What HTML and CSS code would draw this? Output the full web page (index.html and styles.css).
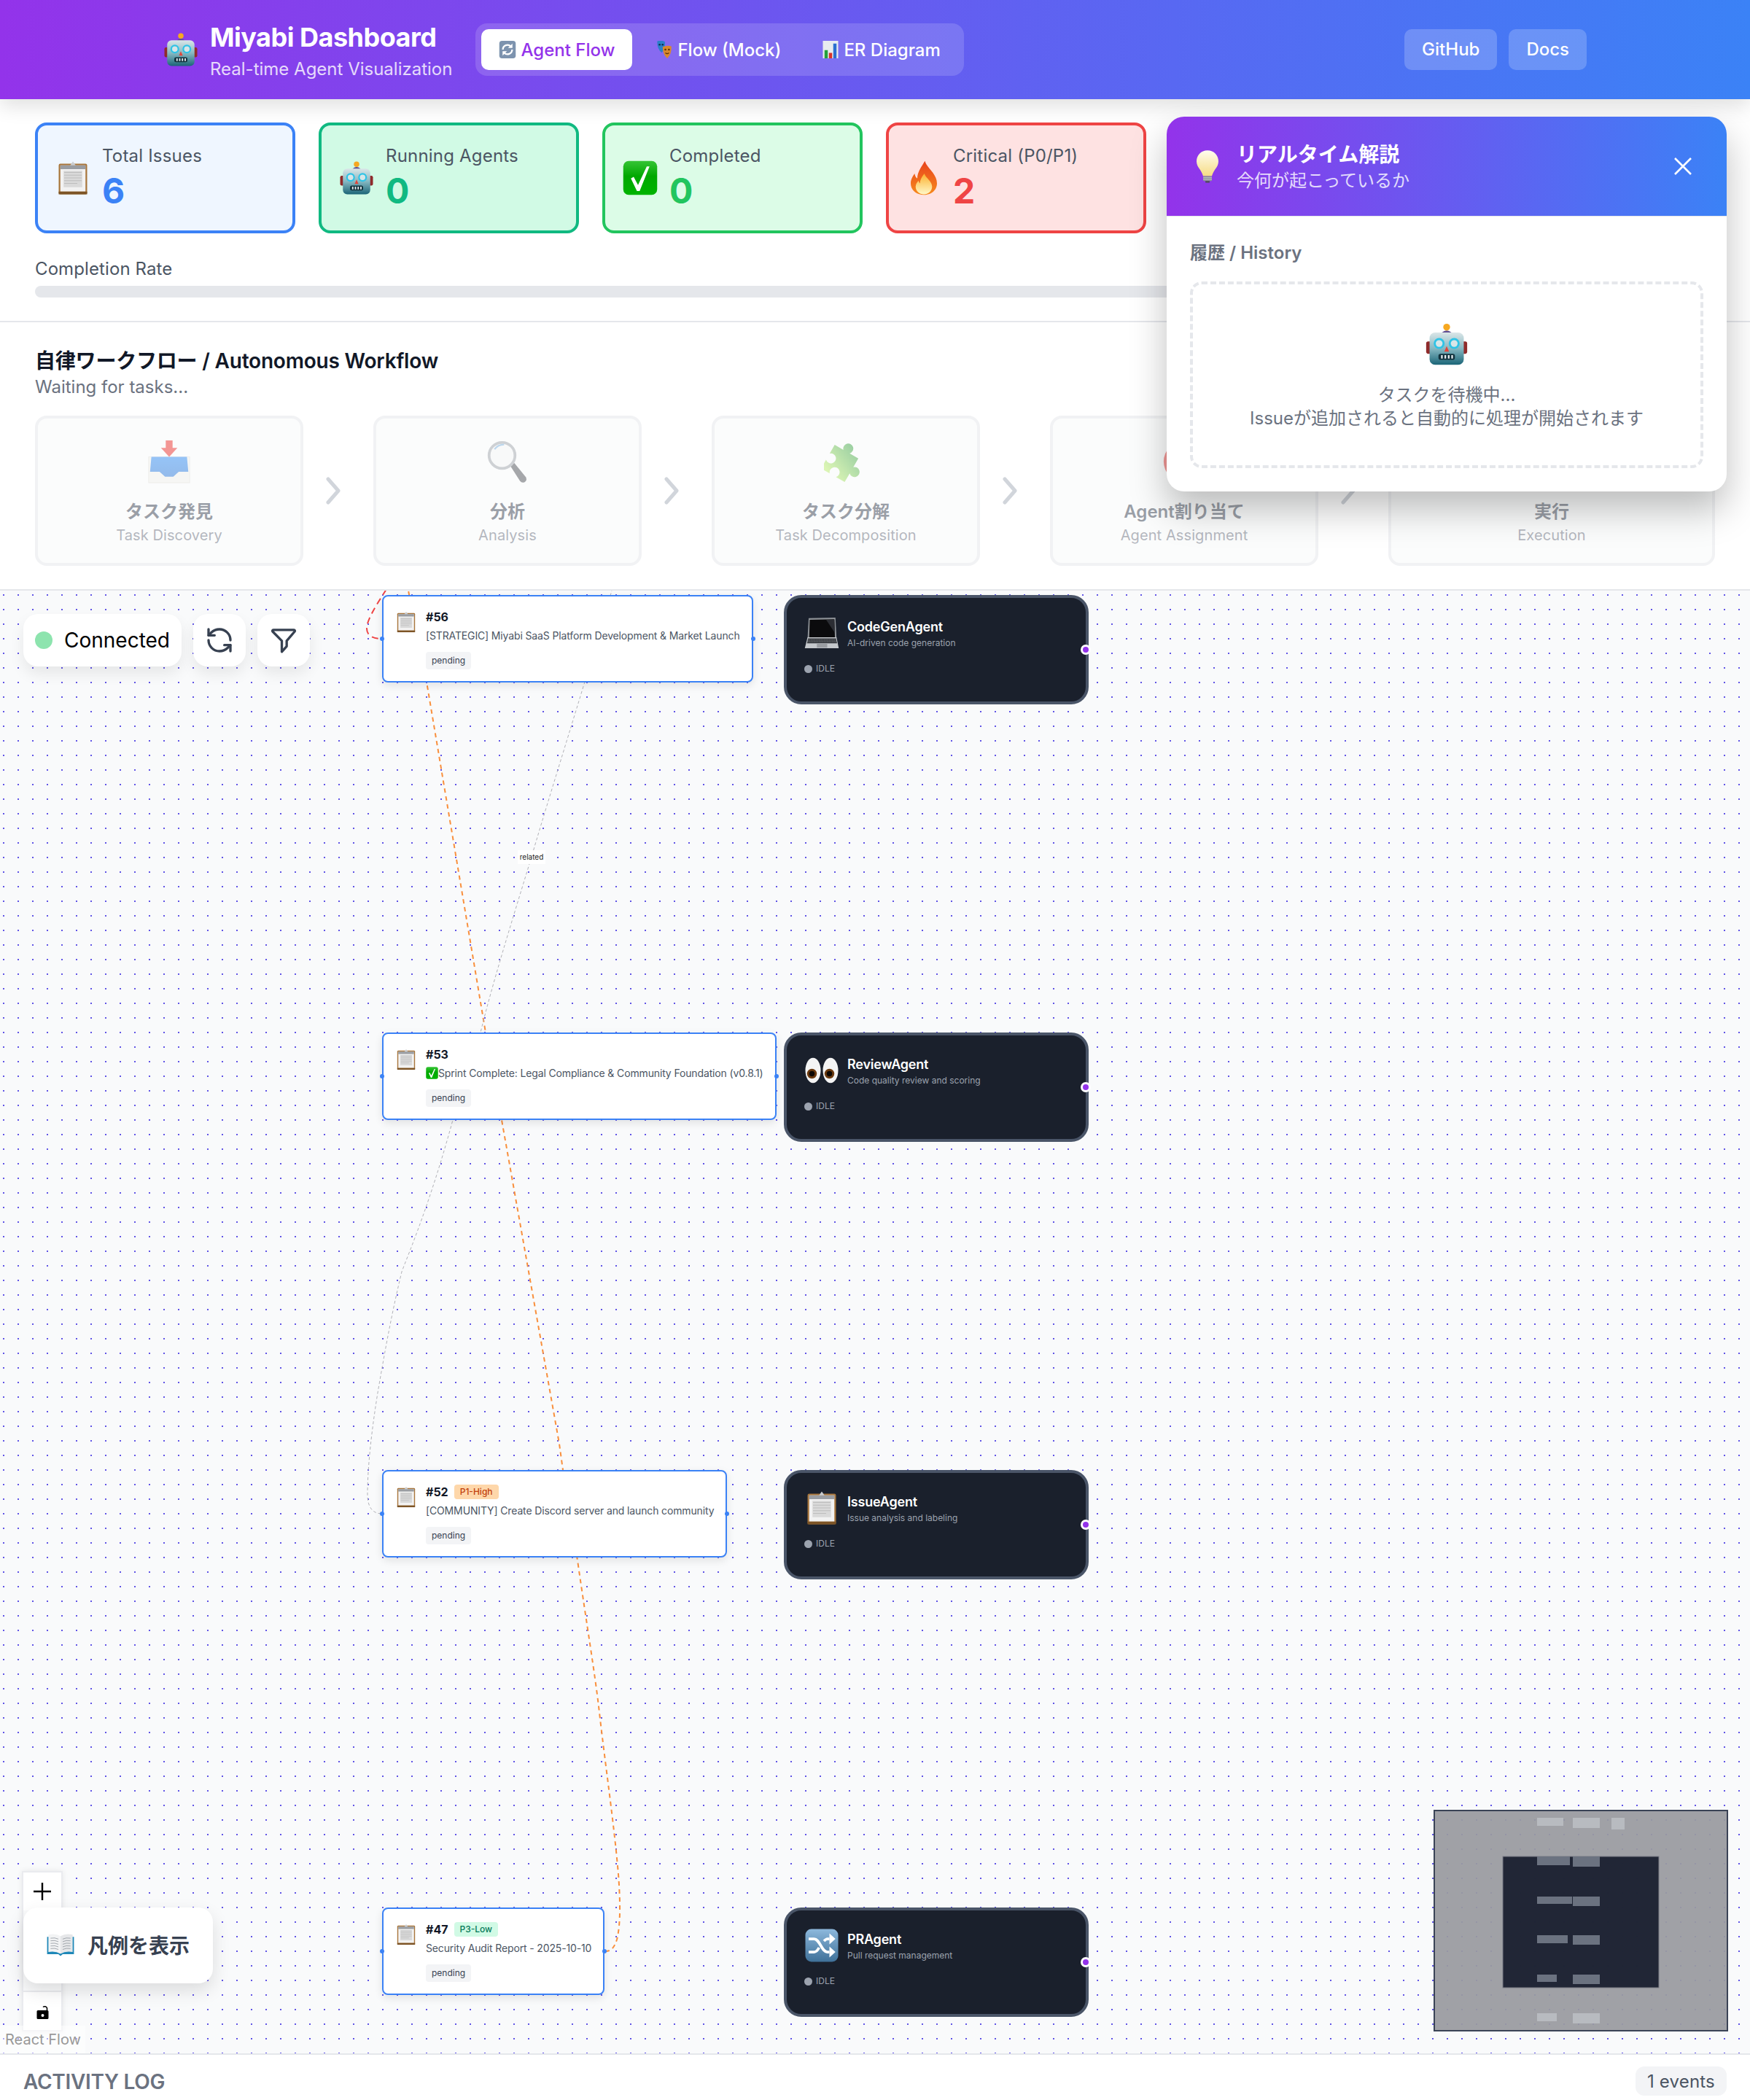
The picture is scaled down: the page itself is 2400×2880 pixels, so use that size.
FILE: index.html
```html
<!DOCTYPE html>
<html lang="en">
<head>
    <meta charset="UTF-8">
    <title>Miyabi Dashboard</title>
    <link rel="stylesheet" href="styles.css">
</head>
<body>

    <!-- Emoji drawn once, used everywhere -->
    <svg class="sprite" xmlns="http://www.w3.org/2000/svg">
        <defs>
            <linearGradient id="gHead" x1="0" y1="0" x2="0" y2="1">
                <stop offset="0" stop-color="#dbe6e8"/><stop offset="0.5" stop-color="#86b8c2"/><stop offset="1" stop-color="#1b6577"/>
            </linearGradient>
            <linearGradient id="gCheck" x1="0" y1="0" x2="0" y2="1">
                <stop offset="0" stop-color="#35c435"/><stop offset="0.45" stop-color="#00a800"/><stop offset="1" stop-color="#00b400"/>
            </linearGradient>
            <linearGradient id="gFire" x1="0" y1="0" x2="0" y2="1">
                <stop offset="0" stop-color="#e8421c"/><stop offset="1" stop-color="#f78a1d"/>
            </linearGradient>
            <linearGradient id="gFlame" x1="0" y1="0" x2="0" y2="1">
                <stop offset="0" stop-color="#fbb02d"/><stop offset="1" stop-color="#fff8c8"/>
            </linearGradient>
            <linearGradient id="gBulb" x1="0" y1="0" x2="0" y2="1">
                <stop offset="0" stop-color="#fffdf0"/><stop offset="1" stop-color="#f6dc85"/>
            </linearGradient>
            <linearGradient id="gTray" x1="0" y1="0" x2="0" y2="1">
                <stop offset="0" stop-color="#2f8af0"/><stop offset="1" stop-color="#2a78d8"/>
            </linearGradient>
            <linearGradient id="gPuzzle" x1="0.7" y1="0" x2="0.3" y2="1">
                <stop offset="0" stop-color="#2f9a45"/><stop offset="1" stop-color="#b8ec6c"/>
            </linearGradient>
            <linearGradient id="gShuffle" x1="0" y1="0" x2="0" y2="1">
                <stop offset="0" stop-color="#8db8dc"/><stop offset="1" stop-color="#3f7199"/>
            </linearGradient>
        </defs>

        <symbol id="e-robot" viewBox="0 0 64 64">
            <rect x="2" y="28" width="8" height="18" rx="3" fill="#8f2b2b"/>
            <rect x="54" y="28" width="8" height="18" rx="3" fill="#8f2b2b"/>
            <path d="M25 15q7-6 14 0v3H25z" fill="#5e4c8f"/>
            <circle cx="32" cy="7" r="5" fill="#f6a821"/>
            <rect x="7" y="15" width="50" height="47" rx="8" fill="url(#gHead)"/>
            <circle cx="21" cy="31" r="8" fill="#2fc3e6"/><circle cx="21" cy="31" r="5" fill="#d8e6e8"/>
            <circle cx="43" cy="31" r="8" fill="#2fc3e6"/><circle cx="43" cy="31" r="5" fill="#d8e6e8"/>
            <path d="M32 35l3.500 8h-7z" fill="#e2453a"/>
            <rect x="20" y="46" width="24" height="9" rx="3" fill="#12323d"/>
            <path d="M25 48v5M30 48v5M35 48v5M40 48v5" stroke="#e6eef0" stroke-width="2.400"/>
        </symbol>

        <symbol id="e-clipboard" viewBox="0 0 64 64">
            <rect x="6" y="6" width="52" height="56" rx="3" fill="#a8763c"/>
            <rect x="9" y="9" width="46" height="48" fill="#f2f2f2"/>
            <rect x="15" y="19" width="34" height="30" fill="#d9d9d9"/>
            <path d="M16 22h32M16 27h32M16 32h32M16 37h32M16 42h24" stroke="#bdbdbd" stroke-width="1.500"/>
            <rect x="9" y="9" width="46" height="7" fill="#9a9da2"/>
            <path d="M32 2l5 7H27z" fill="#c9ccd0"/>
            <rect x="6" y="57" width="52" height="5" fill="#7d5426"/>
        </symbol>

        <symbol id="e-check" viewBox="0 0 64 64">
            <rect x="1" y="1" width="62" height="62" rx="10" fill="url(#gCheck)"/>
            <path d="M15 33l5-3 8 15L44 11h5L31 56h-5z" fill="#fff"/>
        </symbol>

        <symbol id="e-fire" viewBox="0 0 64 64">
            <path d="M34 1c3 13 22 23 22 41 0 13-11 21-24 21S8 55 8 42c0-8 4-13 7-18 1 4 2 7 5 9 0-12 8-22 14-32z" fill="url(#gFire)"/>
            <path d="M33 24c2 8 14 14 14 24 0 8-7 14-15 14s-15-6-15-14c0-5 3-8 5-11 1 3 2 4 3 5 0-7 4-13 8-18z" fill="url(#gFlame)"/>
        </symbol>

        <symbol id="e-bulb" viewBox="0 0 64 64">
            <path d="M32 3c-12 0-20 9-20 20 0 11 9 15 12 27h16c3-12 12-16 12-27C52 12 44 3 32 3z" fill="url(#gBulb)"/>
            <rect x="24" y="50" width="16" height="9" rx="2" fill="#8d9096"/>
            <path d="M24 53h16M24 56h16" stroke="#d4d6d9" stroke-width="1"/>
            <rect x="28" y="59" width="8" height="3" rx="1" fill="#4d4f54"/>
        </symbol>

        <symbol id="e-inbox" viewBox="0 0 64 64">
            <rect x="2" y="25" width="60" height="38" fill="#eeeeea" stroke="#dcdcd6" stroke-width="1"/>
            <path d="M6 25h52l2 22H46l-8 7H26l-8-7H4z" fill="url(#gTray)"/>
            <path d="M27 1h10v11h7L32 25 20 12h7z" fill="#e8302c"/>
        </symbol>

        <symbol id="e-magnifier" viewBox="0 0 64 64">
            <path d="M36 38l6-4 17 21q2 5-2 7t-7-2z" fill="#4e5157"/>
            <circle cx="24" cy="23" r="19" fill="#f3f4f5" stroke="#9ea4ab" stroke-width="4"/>
            <path d="M13 14q5-7 14-7" fill="none" stroke="#7cb0dc" stroke-width="2.500"/>
        </symbol>

        <symbol id="e-puzzle" viewBox="0 0 64 64">
            <path transform="rotate(30 32 32) translate(-7 0) scale(1.05)" d="M12 18h14a7 7 0 1 1 10 0h14v14a7 7 0 1 1 0 10v14H36a7 7 0 1 0-10 0H12V42a7 7 0 1 0 0-10z" fill="url(#gPuzzle)"/>
        </symbol>

        <symbol id="e-target" viewBox="0 0 64 64">
            <circle cx="32" cy="32" r="30" fill="#e5322d"/><circle cx="32" cy="32" r="21" fill="#fff"/>
            <circle cx="32" cy="32" r="13" fill="#e5322d"/><circle cx="32" cy="32" r="5" fill="#fff"/>
        </symbol>

        <symbol id="e-bolt" viewBox="0 0 64 64">
            <path d="M38 2L12 36h16l-4 26 28-36H36z" fill="#f8c525"/>
        </symbol>

        <symbol id="e-laptop" viewBox="0 0 64 64">
            <path d="M8 5l49-1 2 38H6z" fill="#8d9196"/>
            <path d="M10 8l45-1 1 33H9z" fill="#0b0b0d"/>
            <path d="M40 8h15l1 24z" fill="#2b2d33"/>
            <path d="M6 40h53l4 20H1z" fill="#c5c8cc"/>
            <path d="M7 42h51l2 9H5z" fill="#34373c"/>
            <path d="M6 45h53M5.500 48h54" stroke="#8a8d92" stroke-width="1" stroke-dasharray="2 1"/>
            <rect x="23" y="52" width="19" height="7" fill="#9a9da2"/>
        </symbol>

        <symbol id="e-eyes" viewBox="0 0 64 64">
            <ellipse cx="16" cy="32" rx="14" ry="23" fill="#f4f4f4"/>
            <ellipse cx="48" cy="32" rx="14" ry="23" fill="#f4f4f4"/>
            <circle cx="14" cy="38" r="9" fill="#6b3a10"/><circle cx="14" cy="38" r="5" fill="#0c0703"/>
            <circle cx="46" cy="38" r="9" fill="#6b3a10"/><circle cx="46" cy="38" r="5" fill="#0c0703"/>
        </symbol>

        <symbol id="e-shuffle" viewBox="0 0 64 64">
            <rect x="2" y="2" width="60" height="60" rx="11" fill="url(#gShuffle)"/>
            <path d="M8 20h10c10 0 14 24 24 24h4M8 44h10c4 0 7-4 9-8M36 24c2-2 4-4 6-4h4" fill="none" stroke="#fff" stroke-width="5"/>
            <path d="M46 10l11 10-11 10zM46 34l11 10-11 10z" fill="#fff"/>
        </symbol>

        <symbol id="e-book" viewBox="0 0 64 64">
            <path d="M1 14h62v40H37l-5 4-5-4H1z" fill="#1f88b8"/>
            <path d="M4 9q16-4 28 3v41Q20 46 4 49z" fill="#f2f3f4"/>
            <path d="M60 9q-16-4-28 3v41q12-7 28-4z" fill="#e6e7e9"/>
            <path d="M9 17q10-2 18 2M9 23q10-2 18 2M9 29q10-2 18 2M9 35q10-2 18 2M9 41q10-2 18 2M55 17q-10-2-18 2M55 23q-10-2-18 2M55 29q-10-2-18 2M55 35q-10-2-18 2M55 41q-10-2-18 2" fill="none" stroke="#9aa0a6" stroke-width="1.500"/>
        </symbol>

        <symbol id="e-cycle" viewBox="0 0 64 64">
            <rect x="2" y="0" width="60" height="64" rx="10" fill="#7d93ae"/>
            <path d="M15 32a17 17 0 0 1 29-12" fill="none" stroke="#fff" stroke-width="6"/>
            <path d="M49 32a17 17 0 0 1-29 12" fill="none" stroke="#fff" stroke-width="6"/>
            <path d="M50 10v16H34zM14 54V38h16z" fill="#fff"/>
        </symbol>

        <symbol id="e-masks" viewBox="0 0 64 64">
            <path d="M6 2q14-6 28 1 3 24-11 40Q6 32 6 2z" fill="#2a7fc9"/>
            <circle cx="15" cy="14" r="3.500" fill="#0f2c4c"/><circle cx="26" cy="14" r="3.500" fill="#0f2c4c"/>
            <path d="M26 22q16-7 32-2 2 26-15 44-16-12-17-42z" fill="#d9892c"/>
            <circle cx="36" cy="32" r="3.500" fill="#5b3009"/><circle cx="49" cy="32" r="3.500" fill="#5b3009"/>
            <path d="M36 44q7 6 13 0" fill="none" stroke="#5b3009" stroke-width="3"/>
        </symbol>

        <symbol id="e-chart" viewBox="0 0 64 64">
            <rect x="4" y="0" width="56" height="64" fill="#e8ecef"/>
            <rect x="10" y="34" width="12" height="30" fill="#23a03c"/>
            <rect x="26" y="44" width="12" height="20" fill="#d7332c"/>
            <rect x="42" y="10" width="12" height="54" fill="#2b6fd0"/>
        </symbol>
    </svg>

    <header class="topbar">
        <div class="topbar-left">
            <svg class="emoji-48"><use href="#e-robot"/></svg>
            <div class="brand">
                <h1>Miyabi Dashboard</h1>
                <p>Real-time Agent Visualization</p>
            </div>
            <nav class="tabs">
                <a class="tab active"><svg class="emoji-24"><use href="#e-cycle"/></svg>Agent Flow</a>
                <a class="tab"><svg class="emoji-24"><use href="#e-masks"/></svg>Flow (Mock)</a>
                <a class="tab"><svg class="emoji-24"><use href="#e-chart"/></svg>ER Diagram</a>
            </nav>
        </div>
        <div class="topbar-links">
            <a class="link-btn">GitHub</a>
            <a class="link-btn">Docs</a>
        </div>
    </header>

    <!-- Stats -->
    <section class="stats">
        <div class="stat-row">
            <div class="stat-card blue">
                <svg class="emoji-48"><use href="#e-clipboard"/></svg>
                <div><div class="stat-label">Total Issues</div><div class="stat-value">6</div></div>
            </div>
            <div class="stat-card emerald">
                <svg class="emoji-48"><use href="#e-robot"/></svg>
                <div><div class="stat-label">Running Agents</div><div class="stat-value">0</div></div>
            </div>
            <div class="stat-card green">
                <svg class="emoji-48"><use href="#e-check"/></svg>
                <div><div class="stat-label">Completed</div><div class="stat-value">0</div></div>
            </div>
            <div class="stat-card red">
                <svg class="emoji-48"><use href="#e-fire"/></svg>
                <div><div class="stat-label">Critical (P0/P1)</div><div class="stat-value">2</div></div>
            </div>
        </div>
        <div class="rate-label">Completion Rate</div>
        <div class="rate-bar"></div>
    </section>

    <!-- Workflow steps -->
    <section class="workflow">
        <h2>自律ワークフロー / Autonomous Workflow</h2>
        <p class="workflow-sub">Waiting for tasks...</p>
        <div class="steps">
            <div class="step">
                <svg class="emoji-60"><use href="#e-inbox"/></svg>
                <div class="step-name">タスク発見</div>
                <div class="step-en">Task Discovery</div>
            </div>
            <svg class="step-arrow" viewBox="0 0 24 38"><path d="M4 3l14 16L4 35"/></svg>
            <div class="step">
                <svg class="emoji-60"><use href="#e-magnifier"/></svg>
                <div class="step-name">分析</div>
                <div class="step-en">Analysis</div>
            </div>
            <svg class="step-arrow" viewBox="0 0 24 38"><path d="M4 3l14 16L4 35"/></svg>
            <div class="step">
                <svg class="emoji-60"><use href="#e-puzzle"/></svg>
                <div class="step-name">タスク分解</div>
                <div class="step-en">Task Decomposition</div>
            </div>
            <svg class="step-arrow" viewBox="0 0 24 38"><path d="M4 3l14 16L4 35"/></svg>
            <div class="step">
                <svg class="emoji-60"><use href="#e-target"/></svg>
                <div class="step-name">Agent割り当て</div>
                <div class="step-en">Agent Assignment</div>
            </div>
            <svg class="step-arrow" viewBox="0 0 24 38"><path d="M4 3l14 16L4 35"/></svg>
            <div class="step step-last">
                <svg class="emoji-60"><use href="#e-bolt"/></svg>
                <div class="step-name">実行</div>
                <div class="step-en">Execution</div>
            </div>
        </div>
    </section>

    <!-- Flow canvas -->
    <main class="canvas">
        <svg class="edges" viewBox="0 810 2400 2006">
            <path class="edge-orange" d="M558 800C570 860 578 900 585 935L666 1416L688 1536L767 1980L772 2016L792 2140C805 2230 815 2290 821 2340C830 2420 842 2500 848 2570C851 2610 851 2640 846 2660C842 2672 838 2676 830 2676"/>
            <path class="edge-gray" d="M842 800L802 935C770 1040 745 1120 729 1175C700 1270 675 1350 659 1416L621 1536C590 1650 560 1720 551 1744C535 1810 525 1870 518 1910C510 1960 504 2010 504 2050C504 2068 512 2076 524 2076"/>
            <path class="edge-red" d="M530 808C516 830 503 850 503 862C503 872 512 876 524 876"/>
        </svg>
        <div class="edge-label">related</div>

        <div class="toolbar">
            <div class="tool-pill"><span class="live-dot"></span>Connected</div>
            <button class="tool-btn">
                <svg class="tool-icon" viewBox="0 0 24 24"><path d="M21 12a9 9 0 0 0-9-9 9.750 9.750 0 0 0-6.740 2.740L3 8"/><path d="M3 3v5h5"/><path d="M3 12a9 9 0 0 0 9 9 9.750 9.750 0 0 0 6.740-2.740L21 16"/><path d="M16 16h5v5"/></svg>
            </button>
            <button class="tool-btn">
                <svg class="tool-icon" viewBox="0 0 24 24"><path d="M3.500 3.500h17a.8.8 0 0 1 .6 1.300L14.500 12.500v4.500l-4 4.500v-9L2.900 4.800a.8.8 0 0 1 .6-1.300z"/></svg>
            </button>
        </div>

        <!-- Issue nodes -->
        <div class="issue-node row-1">
            <span class="handle-left"></span><span class="handle-right"></span>
            <svg class="emoji-30"><use href="#e-clipboard"/></svg>
            <div>
                <div class="issue-head"><b>#56</b></div>
                <div class="issue-title">[STRATEGIC] Miyabi SaaS Platform Development &amp; Market Launch</div>
                <span class="state-badge">pending</span>
            </div>
        </div>
        <div class="issue-node row-2">
            <span class="handle-left"></span><span class="handle-right"></span>
            <svg class="emoji-30"><use href="#e-clipboard"/></svg>
            <div>
                <div class="issue-head"><b>#53</b></div>
                <div class="issue-title"><svg class="emoji-17"><use href="#e-check"/></svg>Sprint Complete: Legal Compliance &amp; Community Foundation (v0.8.1)</div>
                <span class="state-badge">pending</span>
            </div>
        </div>
        <div class="issue-node row-3">
            <span class="handle-left"></span><span class="handle-right"></span>
            <svg class="emoji-30"><use href="#e-clipboard"/></svg>
            <div>
                <div class="issue-head"><b>#52</b><span class="prio high">P1-High</span></div>
                <div class="issue-title">[COMMUNITY] Create Discord server and launch community</div>
                <span class="state-badge">pending</span>
            </div>
        </div>
        <div class="issue-node row-4">
            <span class="handle-left"></span><span class="handle-right"></span>
            <svg class="emoji-30"><use href="#e-clipboard"/></svg>
            <div>
                <div class="issue-head"><b>#47</b><span class="prio low">P3-Low</span></div>
                <div class="issue-title">Security Audit Report - 2025-10-10</div>
                <span class="state-badge">pending</span>
            </div>
        </div>

        <!-- Agent nodes -->
        <div class="agent-node row-1">
            <div class="agent-top">
                <svg class="emoji-48"><use href="#e-laptop"/></svg>
                <div><div class="agent-name">CodeGenAgent</div><div class="agent-desc">AI-driven code generation</div></div>
            </div>
            <div class="agent-state"><span class="idle-dot"></span>IDLE</div>
            <span class="agent-handle"></span>
        </div>
        <div class="agent-node row-2">
            <div class="agent-top">
                <svg class="emoji-48"><use href="#e-eyes"/></svg>
                <div><div class="agent-name">ReviewAgent</div><div class="agent-desc">Code quality review and scoring</div></div>
            </div>
            <div class="agent-state"><span class="idle-dot"></span>IDLE</div>
            <span class="agent-handle"></span>
        </div>
        <div class="agent-node row-3">
            <div class="agent-top">
                <svg class="emoji-48"><use href="#e-clipboard"/></svg>
                <div><div class="agent-name">IssueAgent</div><div class="agent-desc">Issue analysis and labeling</div></div>
            </div>
            <div class="agent-state"><span class="idle-dot"></span>IDLE</div>
            <span class="agent-handle"></span>
        </div>
        <div class="agent-node row-4">
            <div class="agent-top">
                <svg class="emoji-48"><use href="#e-shuffle"/></svg>
                <div><div class="agent-name">PRAgent</div><div class="agent-desc">Pull request management</div></div>
            </div>
            <div class="agent-state"><span class="idle-dot"></span>IDLE</div>
            <span class="agent-handle"></span>
        </div>

        <!-- Zoom controls, mostly behind the legend button -->
        <div class="controls">
            <button class="control-btn">
                <svg class="control-icon" viewBox="0 0 24 24"><path d="M12 0v24M0 12h24" stroke="#000" stroke-width="2.400"/></svg>
            </button>
            <div class="control-gap"></div>
            <button class="control-btn">
                <svg class="control-icon" viewBox="0 0 24 24"><path d="M6 11h13a1.500 1.500 0 0 1 1.500 1.500v9a1.500 1.500 0 0 1-1.500 1.500H6a1.500 1.500 0 0 1-1.500-1.500v-9A1.500 1.500 0 0 1 6 11zm6.500 5a2 2 0 1 0 0 4 2 2 0 0 0 0-4z" fill="#000" fill-rule="evenodd"/><path d="M13 6.500a3.500 3.500 0 0 1 5.500 1.500V11" fill="none" stroke="#000" stroke-width="1.600"/></svg>
            </button>
        </div>

        <button class="legend-btn"><svg class="emoji-38"><use href="#e-book"/></svg>凡例を表示</button>

        <div class="attribution">React Flow</div>

        <svg class="minimap" viewBox="1968 2484 400 300">
            <rect class="mm-mask" x="1968" y="2484" width="400" height="300"/>
            <rect class="mm-view" x="2061" y="2546" width="214" height="180"/>
            <g class="mm-out">
                <rect x="2108" y="2493" width="36" height="11"/><rect x="2157" y="2493" width="37" height="14"/><rect x="2210" y="2493" width="18" height="16"/>
                <rect x="2108" y="2761" width="27" height="11"/><rect x="2157" y="2761" width="37" height="14"/>
            </g>
            <g class="mm-in">
                <rect x="2108" y="2546" width="45" height="12"/><rect x="2157" y="2546" width="37" height="14"/>
                <rect x="2108" y="2601" width="48" height="10"/><rect x="2157" y="2601" width="37" height="13"/>
                <rect x="2108" y="2654" width="42" height="11"/><rect x="2157" y="2654" width="37" height="13"/>
                <rect x="2108" y="2708" width="27" height="10"/><rect x="2157" y="2708" width="37" height="13"/>
            </g>
        </svg>
    </main>

    <footer class="activity">
        <div class="activity-title">ACTIVITY LOG</div>
        <div class="activity-count">1 events</div>
    </footer>

    <!-- Floating explanation panel -->
    <aside class="explain">
        <div class="explain-head">
            <svg class="emoji-48"><use href="#e-bulb"/></svg>
            <div class="explain-text">
                <div class="explain-title">リアルタイム解説</div>
                <div class="explain-sub">今何が起こっているか</div>
            </div>
            <button class="explain-close">
                <svg viewBox="0 0 24 24" width="24" height="24"><path d="M1 1l22 22M23 1L1 23" stroke="#fff" stroke-width="2.600"/></svg>
            </button>
        </div>
        <div class="explain-body">
            <div class="explain-label">履歴 / History</div>
            <div class="explain-empty">
                <svg class="emoji-60"><use href="#e-robot"/></svg>
                <p>タスクを待機中...<br>Issueが追加されると自動的に処理が開始されます</p>
            </div>
        </div>
    </aside>

</body>
</html>
```

FILE: styles.css
```css
* {
    box-sizing: border-box;
}
html, body {
    margin: 0;
    height: 2880px;
    overflow: hidden;
}
body {
    position: relative;
    display: flex;
    flex-direction: column;
    font-family: Inter, "Noto Sans CJK JP", sans-serif;
    background: #fff;
    color: #111827;
}
h1, h2, p {
    margin: 0;
}
button {
    border: 0;
    padding: 0;
    font-family: inherit;
}
.sprite {
    position: absolute;
    width: 0;
    height: 0;
}
.emoji-17 { width: 17px; height: 17px; vertical-align: -3px; flex: none; }
.emoji-24 { width: 24px; height: 24px; flex: none; }
.emoji-30 { width: 30px; height: 30px; flex: none; margin-top: 4px; }
.emoji-38 { width: 38px; height: 38px; flex: none; }
.emoji-48 { width: 48px; height: 48px; flex: none; }
.emoji-60 { width: 60px; height: 60px; flex: none; display: block; }

/* Top bar */
.topbar {
    flex: 0 0 136px;
    display: flex;
    align-items: center;
    justify-content: space-between;
    padding: 0 224px;
    background: linear-gradient(to right, #9333ea, #3b82f6);
    box-shadow: 0 10px 25px rgba(0, 0, 0, 0.12);
    position: relative;
    z-index: 2;
}
.topbar-left {
    display: flex;
    align-items: center;
}
.brand {
    margin-left: 16px;
    margin-right: 32px;
    padding-top: 4px;
    color: #fff;
}
.brand h1 {
    font-size: 36px;
    line-height: 44px;
    font-weight: 700;
    letter-spacing: -0.5px;
}
.brand p {
    margin-top: 6px;
    font-size: 24px;
    line-height: 32px;
    opacity: 0.8;
}
.tabs {
    display: flex;
    gap: 8px;
    padding: 8px;
    border-radius: 16px;
    background: rgba(255, 255, 255, 0.15);
}
.tab {
    display: flex;
    align-items: center;
    gap: 6px;
    height: 56px;
    padding: 0 24px;
    border-radius: 10px;
    font-size: 24px;
    font-weight: 500;
    color: #fff;
}
.tab.active {
    background: #fff;
    color: #9333ea;
}
.topbar-links {
    display: flex;
    gap: 16px;
}
.link-btn {
    height: 56px;
    line-height: 56px;
    padding: 0 24px;
    border-radius: 10px;
    font-size: 24px;
    font-weight: 500;
    color: #fff;
    background: rgba(255, 255, 255, 0.2);
}

/* Stats */
.stats {
    flex: 0 0 306px;
    padding: 32px 48px;
    border-bottom: 2px solid #e5e7eb;
}
.stat-row {
    display: flex;
    gap: 32px;
}
.stat-card {
    flex: 0 0 357px;
    height: 152px;
    display: flex;
    align-items: center;
    gap: 16px;
    padding: 24px;
    border: 4px solid;
    border-radius: 16px;
}
.stat-card.blue { border-color: #3b82f6; background: #eff6ff; color: #3b82f6; }
.stat-card.emerald { border-color: #10b981; background: #d1fae5; color: #10b981; }
.stat-card.green { border-color: #22c55e; background: #dcfce7; color: #22c55e; }
.stat-card.red { border-color: #ef4444; background: #fee2e2; color: #ef4444; }
.stat-label {
    font-size: 24px;
    line-height: 36px;
    letter-spacing: 0.2px;
    color: #4b5563;
}
.stat-value {
    font-size: 48px;
    line-height: 60px;
    font-weight: 700;
}
.rate-label {
    margin-top: 31px;
    margin-bottom: 5px;
    font-size: 24px;
    line-height: 36px;
    letter-spacing: 0.1px;
    color: #4b5563;
}
.rate-bar {
    height: 16px;
    border-radius: 8px;
    background: #e5e7eb;
}

/* Workflow */
.workflow {
    flex: 0 0 368px;
    padding: 32px 48px;
    border-bottom: 2px solid #e5e7eb;
}
.workflow h2 {
    font-size: 28px;
    line-height: 42px;
    font-weight: 600;
    letter-spacing: -0.2px;
}
.workflow-sub {
    font-size: 24px;
    line-height: 30px;
    color: #6b7280;
    margin-bottom: 24px;
}
.steps {
    display: flex;
    align-items: center;
}
.step {
    flex: 0 0 368px;
    height: 206px;
    padding: 29px 24px 24px;
    display: flex;
    flex-direction: column;
    align-items: center;
    border: 4px solid #e5e7eb;
    border-radius: 16px;
    background: #f9fafb;
    opacity: 0.5;
}
.step-last {
    flex: 1;
}
.step-name {
    margin-top: 21px;
    font-size: 24px;
    line-height: 36px;
    font-weight: 600;
    color: #374151;
}
.step-en {
    font-size: 20px;
    line-height: 28px;
    letter-spacing: 0.1px;
    color: #6b7280;
}
.step-arrow {
    flex: none;
    width: 24px;
    height: 38px;
    margin: 0 42px 0 30px;
    fill: none;
    stroke: #d1d5db;
    stroke-width: 5;
    stroke-linecap: round;
    stroke-linejoin: round;
}

/* Canvas */
.canvas {
    flex: 1;
    position: relative;
    overflow: hidden;
    background-color: #f9fafb;
    background-image: radial-gradient(circle, #6054e6 1.1px, transparent 1.2px);
    background-size: 20px 20px;
    background-position: -5px -4px;
}
.edges {
    position: absolute;
    left: 0;
    top: 0;
    width: 2400px;
    height: 2006px;
    fill: none;
}
.edge-orange { stroke: #f98f3c; stroke-width: 2; stroke-dasharray: 6 5; }
.edge-gray { stroke: #b1b1b7; stroke-width: 1; stroke-dasharray: 4 3; }
.edge-red { stroke: #ef4444; stroke-width: 2; stroke-dasharray: 9 6; }
.edge-label {
    position: absolute;
    left: 710px;
    top: 356px;
    width: 38px;
    height: 19px;
    background: #fff;
    font-size: 10px;
    line-height: 19px;
    text-align: center;
    color: #222;
}
.toolbar {
    position: absolute;
    left: 32px;
    top: 32px;
    display: flex;
    gap: 16px;
}
.tool-pill, .tool-btn {
    height: 72px;
    border-radius: 20px;
    background: #fff;
    box-shadow: 0 10px 20px rgba(0, 0, 0, 0.08);
}
.tool-pill {
    display: flex;
    align-items: center;
    gap: 16px;
    width: 217px;
    padding-left: 16px;
    font-size: 28px;
    color: #000;
}
.tool-btn {
    width: 72px;
    display: flex;
    align-items: center;
    justify-content: center;
}
.live-dot {
    width: 24px;
    height: 24px;
    border-radius: 50%;
    background: #8de4ae;
}
.tool-icon {
    width: 40px;
    height: 40px;
    fill: none;
    stroke: #374151;
    stroke-width: 2;
    stroke-linecap: round;
    stroke-linejoin: round;
}

.row-1 { top: 6px; }
.row-2 { top: 606px; }
.row-3 { top: 1206px; }
.row-4 { top: 1806px; }

.issue-node {
    position: absolute;
    left: 524px;
    display: flex;
    gap: 12px;
    padding: 16px;
    border: 2px solid #3b82f6;
    border-radius: 8px;
    background: #fff;
    box-shadow: 0 4px 12px rgba(0, 0, 0, 0.1);
    white-space: nowrap;
}
.handle-left, .handle-right {
    position: absolute;
    top: 55px;
    width: 6px;
    height: 6px;
    border-radius: 50%;
    background: #3b82f6;
}
.handle-left { left: -5px; }
.handle-right { right: -5px; }
.issue-head {
    display: flex;
    align-items: center;
    gap: 8px;
    height: 24px;
    font-size: 16px;
    color: #111827;
}
.prio {
    height: 20px;
    line-height: 20px;
    padding: 0 8px;
    border-radius: 4px;
    font-size: 12px;
    font-weight: 500;
}
.prio.high { background: #fed7aa; color: #c2410c; }
.prio.low { background: #d1fae5; color: #047857; }
.issue-title {
    margin-top: 4px;
    font-size: 14px;
    line-height: 20px;
    letter-spacing: -0.14px;
    color: #4b5563;
}
.state-badge {
    display: inline-block;
    margin-top: 12px;
    padding: 0 8px;
    height: 24px;
    line-height: 24px;
    border-radius: 4px;
    font-size: 12px;
    background: #f3f4f6;
    color: #374151;
    vertical-align: top;
}

.agent-node {
    position: absolute;
    left: 1075px;
    width: 418px;
    height: 150px;
    padding: 24px;
    border: 4px solid #4a5568;
    border-radius: 24px;
    background: #1a202c;
    color: #fff;
}
.agent-top {
    display: flex;
    align-items: center;
    gap: 11px;
}
.agent-name {
    padding-top: 2px;
    font-size: 18px;
    line-height: 24px;
    font-weight: 600;
    letter-spacing: -0.2px;
}
.agent-desc {
    margin-top: 2px;
    font-size: 12px;
    line-height: 16px;
    color: #9ca3af;
}
.agent-state {
    display: flex;
    align-items: center;
    gap: 5px;
    margin-top: 17px;
    font-size: 12px;
    line-height: 16px;
    color: #9ca3af;
}
.idle-dot {
    width: 11px;
    height: 11px;
    border-radius: 50%;
    background: #9ca3af;
}
.agent-handle {
    position: absolute;
    right: -7px;
    top: 64px;
    width: 14px;
    height: 14px;
    border: 3px solid #fff;
    border-radius: 50%;
    background: #9333ea;
}

/* Bottom left controls */
.controls {
    position: absolute;
    left: 30px;
    bottom: 30px;
    width: 56px;
    height: 220px;
    display: flex;
    flex-direction: column;
    border: 2px solid #eaebef;
    box-shadow: 0 0 8px rgba(0, 0, 0, 0.08);
}
.control-btn {
    flex: 0 0 52px;
    display: flex;
    align-items: center;
    justify-content: center;
    background: #fff;
}
.control-gap {
    flex: 1;
    border-bottom: 2px solid #eaebef;
}
.control-icon {
    width: 24px;
    height: 24px;
}
.legend-btn {
    position: absolute;
    left: 32px;
    bottom: 96px;
    width: 260px;
    height: 104px;
    display: flex;
    align-items: center;
    gap: 18px;
    padding-left: 32px;
    padding-bottom: 2px;
    border-radius: 20px;
    background: #fff;
    box-shadow: 0 10px 25px rgba(0, 0, 0, 0.12);
    font-size: 28px;
    font-weight: 600;
    color: #374151;
}
.attribution {
    position: absolute;
    left: 0;
    bottom: 0;
    width: 117px;
    height: 38px;
    padding-left: 7px;
    background: rgba(255, 255, 255, 0.5);
    font-size: 20px;
    line-height: 38px;
    color: #999;
}
.minimap {
    position: absolute;
    right: 30px;
    bottom: 30px;
    width: 404px;
    height: 304px;
    border: 2px solid #3a4356;
}
.mm-mask { fill: rgba(153, 154, 159, 0.93); }
.mm-view { fill: rgba(22, 27, 45, 0.92); stroke: #7a7c85; stroke-width: 1; }
.mm-out { fill: #b8bbc0; }
.mm-in { fill: #6b7280; }

/* Footer */
.activity {
    flex: 0 0 64px;
    display: flex;
    justify-content: space-between;
    align-items: flex-start;
    padding: 16px 32px 0;
    border-top: 2px solid #e5e7eb;
}
.activity-title {
    font-size: 28px;
    line-height: 42px;
    font-weight: 600;
    letter-spacing: -0.3px;
    color: #6b7280;
}
.activity-count {
    height: 40px;
    line-height: 42px;
    padding: 0 16px;
    border-radius: 12px;
    background: #f3f4f6;
    font-size: 24px;
    letter-spacing: 0.2px;
    color: #4b5563;
}

/* Explanation panel */
.explain {
    position: absolute;
    left: 1600px;
    top: 160px;
    width: 768px;
    height: 514px;
    border-radius: 24px;
    background: #fff;
    box-shadow: 0 25px 50px rgba(0, 0, 0, 0.25);
    overflow: hidden;
    z-index: 3;
}
.explain-head {
    height: 137px;
    display: flex;
    align-items: center;
    gap: 16px;
    padding: 0 32px;
    background: linear-gradient(to right, #9333ea, #3b82f6);
    border-bottom: 1px solid #e5e7eb;
    color: #fff;
}
.explain-text {
    flex: 1;
    padding-top: 3px;
}
.explain-title {
    font-size: 28px;
    line-height: 36px;
    font-weight: 700;
}
.explain-sub {
    font-size: 24px;
    line-height: 36px;
    opacity: 0.8;
}
.explain-close {
    width: 56px;
    height: 56px;
    display: flex;
    align-items: center;
    justify-content: center;
    background: none;
}
.explain-body {
    padding: 32px;
}
.explain-label {
    margin-bottom: 21px;
    font-size: 24px;
    line-height: 36px;
    font-weight: 600;
    color: #6b7280;
}
.explain-empty {
    height: 256px;
    padding-top: 52px;
    display: flex;
    flex-direction: column;
    align-items: center;
    gap: 24px;
    border: 4px dashed #e5e7eb;
    border-radius: 16px;
}
.explain-empty p {
    font-size: 24px;
    line-height: 32px;
    color: #6b7280;
    text-align: center;
}
```
